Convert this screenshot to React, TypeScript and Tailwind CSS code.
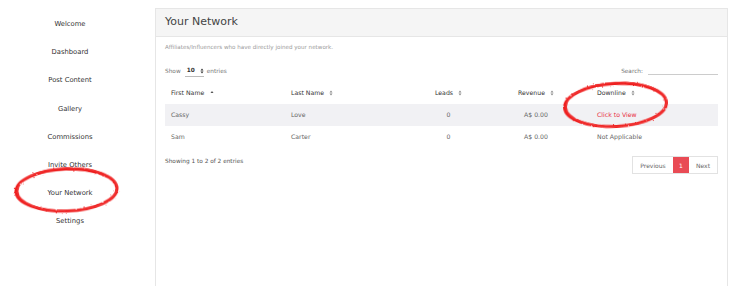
import type { ReactNode } from "react";

const NAV_ITEMS = [
  "Welcome",
  "Dashboard",
  "Post Content",
  "Gallery",
  "Commissions",
  "Invite Others",
  "Your Network",
  "Settings",
];

const ROWS = [
  { first: "Cassy", last: "Love", leads: "0", revenue: "A$ 0.00", downline: "Click to View", link: true },
  { first: "Sam", last: "Carter", leads: "0", revenue: "A$ 0.00", downline: "Not Applicable", link: false },
];

function SortBoth() {
  return (
    <svg width="4" height="6" viewBox="0 0 4 6" className="ml-[5px] inline-block">
      <path d="M0.5 2.4 L2 0.6 L3.5 2.4 Z" fill="#8a8a8a" />
      <path d="M0.5 3.6 L2 5.4 L3.5 3.6 Z" fill="#8a8a8a" />
    </svg>
  );
}

function SortUp() {
  return (
    <svg width="4" height="6" viewBox="0 0 4 6" className="ml-[6px] inline-block">
      <path d="M0.5 3 L2 1 L3.5 3 Z" fill="#555" />
    </svg>
  );
}

function Cell({ className, children }: { className: string; children: ReactNode }) {
  return <div className={`flex items-center ${className}`}>{children}</div>;
}

function Scribble({ cx, cy, rx, ry, rot }: { cx: number; cy: number; rx: number; ry: number; rot: number }) {
  return (
    <g filter="url(#rough)" transform={`rotate(${rot} ${cx} ${cy})`}>
      <ellipse cx={cx} cy={cy} rx={rx} ry={ry} fill="none" stroke="#ee1c1c" strokeWidth="3" />
      <ellipse cx={cx + 0.8} cy={cy - 0.5} rx={rx - 0.8} ry={ry + 0.5} fill="none" stroke="#f03030" strokeWidth="1.6" />
    </g>
  );
}

export default function App() {
  return (
    <div
      className="relative flex h-[286px] w-[735px] overflow-hidden bg-white text-[#444]"
      style={{ fontFamily: '"DejaVu Sans", sans-serif' }}
    >
      {/* Sidebar */}
      <aside className="flex w-[140px] shrink-0 flex-col pt-[10px]">
        {NAV_ITEMS.map((item) => (
          <div key={item} className="flex h-[28.2px] items-center justify-center text-[6.8px] text-[#333]">
            {item}
          </div>
        ))}
      </aside>

      {/* Panel */}
      <main className="ml-[15px] mt-[8px] flex h-[300px] w-[573px] shrink-0 flex-col border border-[#e6e6e6] bg-white">
        <div className="flex h-[28px] items-center border-b border-[#e6e6e6] bg-[#f5f5f5] px-[9px] text-[11px] text-[#444]">
          Your Network
        </div>

        <div className="px-[9px]">
          <div className="mt-[6px] text-[5.6px] text-[#9a9a9a]">
            Affiliates/Influencers who have directly joined your network.
          </div>

          {/* Controls */}
          <div className="mt-[15px] flex items-center justify-between text-[5.8px] text-[#777]">
            <div className="flex items-center">
              <span>Show</span>
              <span className="ml-[4px] flex w-[19px] items-center justify-between border-b border-[#bbb] pb-[1px] pl-[2px] text-[#333]">
                <span className="font-semibold">10</span>
                <svg width="4" height="6" viewBox="0 0 4 6">
                  <path d="M0.5 2.4 L2 0.6 L3.5 2.4 Z" fill="#333" />
                  <path d="M0.5 3.6 L2 5.4 L3.5 3.6 Z" fill="#333" />
                </svg>
              </span>
              <span className="ml-[3px]">entries</span>
            </div>
            <div className="flex items-center">
              <span>Search:</span>
              <span className="ml-[5px] mt-[5px] h-[1px] w-[70px] bg-[#ccc]" />
            </div>
          </div>

          {/* Table */}
          <div className="mt-[5px] text-[6.2px]">
            <div className="flex h-[22px] items-center text-[#333]">
              <Cell className="w-[120px] pl-[6px]">
                First Name
                <SortUp />
              </Cell>
              <Cell className="w-[131px] pl-[6px]">
                Last Name
                <SortBoth />
              </Cell>
              <Cell className="w-[65px] justify-center">
                Leads
                <SortBoth />
              </Cell>
              <Cell className="w-[110px] justify-center">
                Revenue
                <SortBoth />
              </Cell>
              <Cell className="flex-1 pl-[6px]">
                Downline
                <SortBoth />
              </Cell>
            </div>
            {ROWS.map((row, i) => (
              <div
                key={row.first}
                className={`flex h-[21.5px] items-center text-[#666] ${i === 0 ? "bg-[#f1f1f4]" : ""}`}
              >
                <Cell className="w-[120px] pl-[6px]">{row.first}</Cell>
                <Cell className="w-[131px] pl-[6px]">{row.last}</Cell>
                <Cell className="w-[65px] justify-center">{row.leads}</Cell>
                <Cell className="w-[110px] justify-center">{row.revenue}</Cell>
                <Cell className={`flex-1 pl-[6px] ${row.link ? "text-[#e8303f]" : ""}`}>{row.downline}</Cell>
              </div>
            ))}
          </div>

          {/* Footer */}
          <div className="mt-[9px] flex items-start justify-between">
            <div className="mt-[1px] text-[5.8px] text-[#555]">Showing 1 to 2 of 2 entries</div>
            <div className="flex h-[18px] border border-[#e2e2e2] text-[6px] text-[#666]">
              <span className="flex w-[40px] items-center justify-center">Previous</span>
              <span className="flex w-[16px] items-center justify-center bg-[#e94b55] text-white">1</span>
              <span className="flex w-[28px] items-center justify-center">Next</span>
            </div>
          </div>
        </div>
      </main>

      {/* Hand-drawn red marks */}
      <svg className="pointer-events-none absolute left-0 top-0" width="735" height="286">
        <defs>
          <filter id="rough" x="-10%" y="-20%" width="120%" height="140%">
            <feTurbulence type="fractalNoise" baseFrequency="0.9" numOctaves="2" seed="3" />
            <feDisplacementMap in="SourceGraphic" scale="2.2" />
          </filter>
        </defs>
        <Scribble cx={66.5} cy={190} rx={50.5} ry={21} rot={-2} />
        <Scribble cx={615.5} cy={105} rx={51} ry={21.5} rot={-3} />
      </svg>
    </div>
  );
}
